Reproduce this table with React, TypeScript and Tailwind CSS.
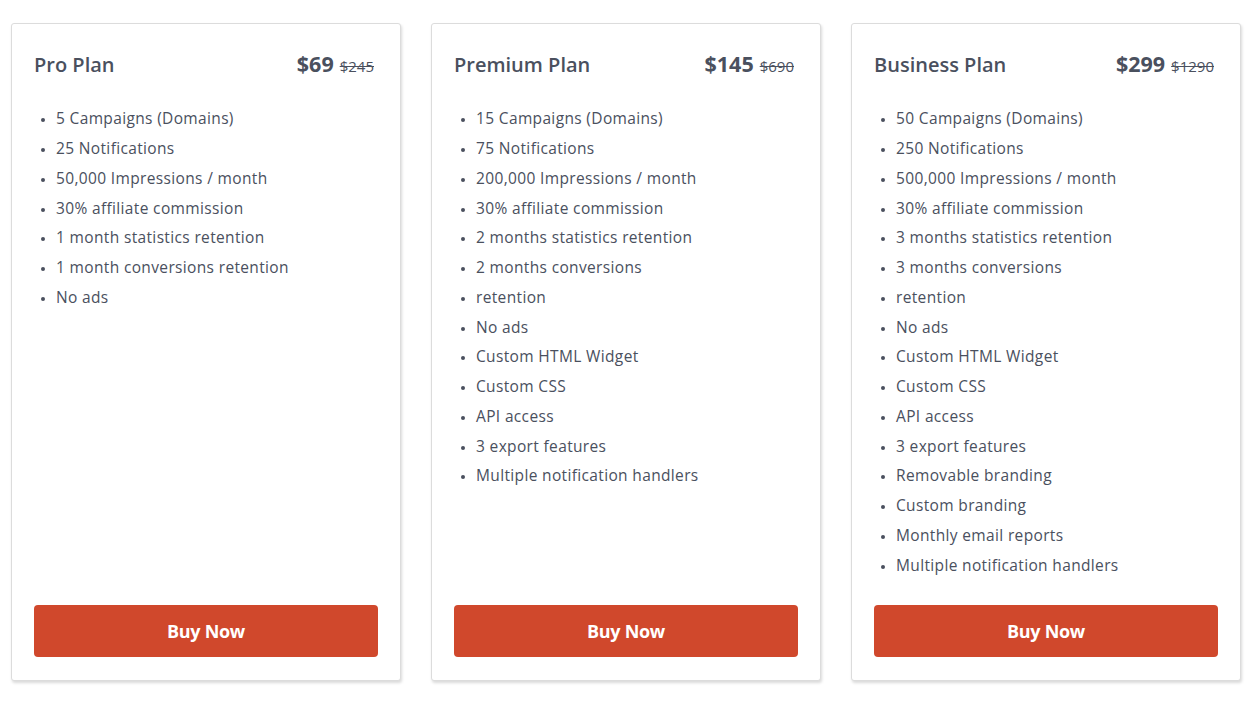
import React from 'react';

interface Plan {
  name: string;
  price: string;
  oldPrice: string;
  features: string[];
}

const plans: Plan[] = [
  {
    name: 'Pro Plan',
    price: '$69',
    oldPrice: '$245',
    features: [
      '5 Campaigns (Domains)',
      '25 Notifications',
      '50,000 Impressions / month',
      '30% affiliate commission',
      '1 month statistics retention',
      '1 month conversions retention',
      'No ads',
    ],
  },
  {
    name: 'Premium Plan',
    price: '$145',
    oldPrice: '$690',
    features: [
      '15 Campaigns (Domains)',
      '75 Notifications',
      '200,000 Impressions / month',
      '30% affiliate commission',
      '2 months statistics retention',
      '2 months conversions',
      'retention',
      'No ads',
      'Custom HTML Widget',
      'Custom CSS',
      'API access',
      '3 export features',
      'Multiple notification handlers',
    ],
  },
  {
    name: 'Business Plan',
    price: '$299',
    oldPrice: '$1290',
    features: [
      '50 Campaigns (Domains)',
      '250 Notifications',
      '500,000 Impressions / month',
      '30% affiliate commission',
      '3 months statistics retention',
      '3 months conversions',
      'retention',
      'No ads',
      'Custom HTML Widget',
      'Custom CSS',
      'API access',
      '3 export features',
      'Removable branding',
      'Custom branding',
      'Monthly email reports',
      'Multiple notification handlers',
    ],
  },
];

export default function App() {
  return (
    <div
      className="min-h-screen bg-white pl-[11px] pt-[23px] text-[#4a505e]"
      style={{ fontFamily: '"Open Sans", "Liberation Sans", sans-serif' }}
    >
      <div className="flex gap-[30px]">
        {plans.map((plan) => (
          <div
            key={plan.name}
            className="flex w-[390px] shrink-0 flex-col rounded-[3px] border border-[#dcdcdc] bg-white px-[22px] pb-[23px] pt-[24px] shadow-[1px_2px_3px_rgba(0,0,0,0.15)]"
          >
            {/* Header */}
            <div className="flex items-baseline justify-between">
              <h2 className="text-[20px] font-semibold">{plan.name}</h2>
              <div className="mr-[4px] flex items-baseline gap-[6px]">
                <span className="text-[21.5px] font-bold">{plan.price}</span>
                <span className="text-[15px] line-through">{plan.oldPrice}</span>
              </div>
            </div>

            {/* Features */}
            <ul className="mb-[25px] mt-[24px] list-disc pl-[22px] text-[15.5px] leading-[29.75px] tracking-[0.35px] marker:text-[12px]">
              {plan.features.map((f) => (
                <li key={f}>{f}</li>
              ))}
            </ul>

            <button className="mt-auto h-[52px] w-full rounded-[4px] bg-[#d0482c] text-[18px] font-bold tracking-[-0.3px] text-white">
              Buy Now
            </button>
          </div>
        ))}
      </div>
    </div>
  );
}
